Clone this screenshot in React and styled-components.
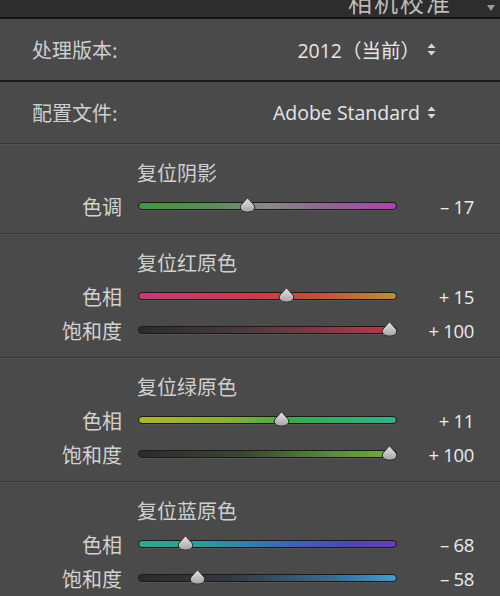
import React from "react";
import styled, { createGlobalStyle } from "styled-components";

const GlobalStyle = createGlobalStyle`
  html, body {
    margin: 0;
    padding: 0;
    background: #4a4a4a;
  }
  body {
    font-family: "Noto Sans CJK SC", "Noto Sans", sans-serif;
  }
`;

const Panel = styled.div`
  width: 500px;
  height: 596px;
  overflow: hidden;
  background: #4a4a4a;
  color: #d2d2d2;
  display: flex;
  flex-direction: column;
`;

const Header = styled.div`
  height: 17px;
  flex: 0 0 17px;
  background: #2d2d2d;
  border-bottom: 2px solid #151515;
  display: flex;
  align-items: flex-end;
  justify-content: flex-end;
  gap: 34px;
  padding-right: 4px;
  overflow: hidden;
`;

const Title = styled.div`
  font-size: 24px;
  line-height: 24px;
  letter-spacing: 2px;
  color: #bdbdbd;
  margin-bottom: 3px;
`;

const HeaderIcon = styled.svg`
  width: 10px;
  height: 10px;
  margin-bottom: 4px;
`;

const SettingRow = styled.div`
  height: 61px;
  flex: 0 0 61px;
  display: flex;
  align-items: center;
  justify-content: space-between;
  padding: 0 64px 0 32px;
  border-bottom: ${(p) => (p.$heavy ? "2px solid #1c1c1c" : "1px solid #363636")};
  box-shadow: ${(p) => (p.$heavy ? "none" : "0 1px 0 #545454")};
`;

const SettingLabel = styled.div`
  font-size: 20px;
  color: #cfcfcf;
`;

const Dropdown = styled.div`
  display: flex;
  align-items: center;
  gap: 5px;
  font-family: "Open Sans", "Noto Sans CJK SC", sans-serif;
  font-size: 19.5px;
  color: #e6e6e6;
`;

const Stepper = styled.svg`
  width: 9px;
  height: 13px;
  margin-left: 2px;
`;

const Section = styled.div`
  padding: 13px 0 10px;
  border-bottom: 1px solid #383838;
  box-shadow: 0 1px 0 #525252;
  display: flex;
  flex-direction: column;
`;

const SectionTitle = styled.div`
  height: 32px;
  line-height: 32px;
  padding-left: 137px;
  font-size: 20px;
  color: #d0d0d0;
`;

const SliderRow = styled.div`
  height: 34px;
  display: grid;
  grid-template-columns: 122px 259px 61px;
  column-gap: 16px;
  align-items: center;
  padding-right: 26px;
`;

const SliderLabel = styled.div`
  text-align: right;
  font-size: 20px;
  color: #d2d2d2;
`;

const Track = styled.div`
  position: relative;
  height: 6px;
  border-radius: 4px;
  border: 1px solid #1a1a1a;
  background: ${(p) => p.$gradient};
  box-shadow: 0 1px 0 rgba(255, 255, 255, 0.06);
`;

const Thumb = styled.svg`
  position: absolute;
  top: -6px;
  width: 17px;
  height: 16px;
  margin-left: -8px;
`;

const Value = styled.div`
  text-align: right;
  font-family: "Open Sans", "Noto Sans", sans-serif;
  font-size: 18.5px;
  color: #ececec;
  white-space: pre;
  letter-spacing: -0.3px;
`;

const sections = [
  {
    title: "复位阴影",
    rows: [
      {
        label: "色调",
        value: -17,
        gradient: "linear-gradient(90deg, #3c9a3c 0%, #5f8a5c 30%, #8a8a8a 50%, #8a6a8c 70%, #b23fb6 100%)",
      },
    ],
  },
  {
    title: "复位红原色",
    rows: [
      {
        label: "色相",
        value: 15,
        gradient: "linear-gradient(90deg, #c23a78 0%, #cc3a4a 45%, #c2503a 70%, #b89236 100%)",
      },
      {
        label: "饱和度",
        value: 100,
        gradient: "linear-gradient(90deg, #2c2c2c 0%, #4a3a3c 40%, #8a3a46 75%, #c0364a 100%)",
      },
    ],
  },
  {
    title: "复位绿原色",
    rows: [
      {
        label: "色相",
        value: 11,
        gradient: "linear-gradient(90deg, #b0b430 0%, #8aae34 35%, #3ca84a 60%, #34b08c 100%)",
      },
      {
        label: "饱和度",
        value: 100,
        gradient: "linear-gradient(90deg, #2c2c2c 0%, #3a4434 40%, #5a8a3c 75%, #74ae3c 100%)",
      },
    ],
  },
  {
    title: "复位蓝原色",
    rows: [
      {
        label: "色相",
        value: -68,
        gradient: "linear-gradient(90deg, #34a88a 0%, #2e9a9a 25%, #3a6ab4 55%, #4a4ab8 80%, #6a3cb6 100%)",
      },
      {
        label: "饱和度",
        value: -58,
        gradient: "linear-gradient(90deg, #2c2c2c 0%, #34383e 35%, #3a6a8e 75%, #4a9ac8 100%)",
      },
    ],
  },
];

function formatValue(v) {
  if (v > 0) return `+ ${v}`;
  if (v < 0) return `– ${Math.abs(v)}`;
  return "0";
}

function SliderThumb({ value }) {
  const pct = (value + 100) / 200;
  // the thumb stays inside the track, inset by half its width
  const left = 8 + pct * (259 - 16);
  return (
    <Thumb viewBox="0 0 17 16" style={{ left: `${left - 1}px` }}>
      <defs>
        <linearGradient id="thumbFill" x1="0" y1="0" x2="0" y2="1">
          <stop offset="0" stopColor="#e4e4e4" />
          <stop offset="1" stopColor="#a4a4a4" />
        </linearGradient>
      </defs>
      <path
        d="M8.5 0.8 L15 8 Q16.4 9.8 15.4 12 Q13.8 15.2 8.5 15.2 Q3.2 15.2 1.6 12 Q0.6 9.8 2 8 Z"
        fill="url(#thumbFill)"
        stroke="#2a2a2a"
        strokeWidth="1"
      />
    </Thumb>
  );
}

function UpDown() {
  return (
    <Stepper viewBox="0 0 9 13">
      <path d="M4.5 0.5 L8.5 5 L0.5 5 Z" fill="#d8d8d8" />
      <path d="M4.5 12.5 L8.5 8 L0.5 8 Z" fill="#d8d8d8" />
    </Stepper>
  );
}

export default function App() {
  return (
    <>
      <GlobalStyle />
      <Panel>
        <Header>
          <Title>相机校准</Title>
          <HeaderIcon viewBox="0 0 10 10">
            <path d="M1 2 L9 2 L5 8 Z" fill="#9a9a9a" />
          </HeaderIcon>
        </Header>

        <SettingRow $heavy>
          <SettingLabel>处理版本:</SettingLabel>
          <Dropdown>
            2012（当前）
            <UpDown />
          </Dropdown>
        </SettingRow>

        <SettingRow>
          <SettingLabel>配置文件:</SettingLabel>
          <Dropdown>
            Adobe Standard
            <UpDown />
          </Dropdown>
        </SettingRow>

        {sections.map((s) => (
          <Section key={s.title}>
            <SectionTitle>{s.title}</SectionTitle>
            {s.rows.map((r) => (
              <SliderRow key={r.label}>
                <SliderLabel>{r.label}</SliderLabel>
                <Track $gradient={r.gradient}>
                  <SliderThumb value={r.value} />
                </Track>
                <Value>{formatValue(r.value)}</Value>
              </SliderRow>
            ))}
          </Section>
        ))}
      </Panel>
    </>
  );
}
